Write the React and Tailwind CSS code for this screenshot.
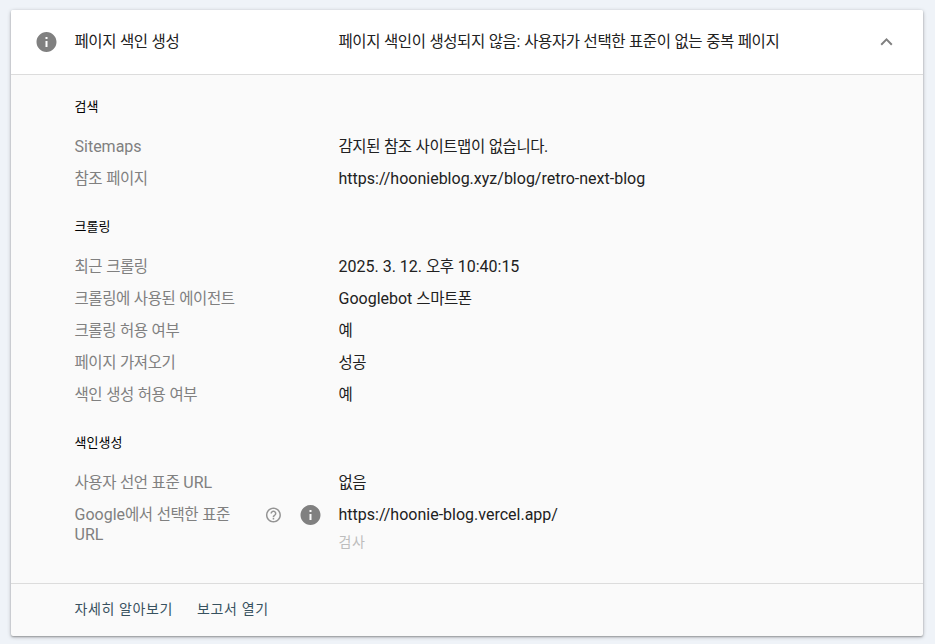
import React from "react";

// Sets Hangul runs slightly smaller and tighter than the Latin text around them.
function T({ children }) {
  return children.split(/([\uac00-\ud7a3]+)/).map((part, i) =>
    /[\uac00-\ud7a3]/.test(part) ? (
      <span key={i} className="text-[15.5px] leading-none tracking-[-0.43px]">{part}</span>
    ) : (
      part
    )
  );
}

function InfoIcon() {
  return (
    <svg viewBox="-0.5 0 24 24" className="size-6 shrink-0" fill="#808080">
      <path d="M12 2C6.48 2 2 6.48 2 12s4.48 10 10 10 10-4.48 10-10S17.52 2 12 2zm1 15h-2v-6h2v6zm0-8h-2V7h2v2z" />
    </svg>
  );
}

function HelpIcon() {
  return (
    <svg viewBox="-0.6 0 24 24" className="size-[18px] shrink-0" fill="#949494">
      <path d="M11 18h2v-2h-2v2zm1-16C6.48 2 2 6.48 2 12s4.48 10 10 10 10-4.48 10-10S17.52 2 12 2zm0 18c-4.41 0-8-3.59-8-8s3.59-8 8-8 8 3.59 8 8-3.59 8-8 8zm0-14c-2.21 0-4 1.79-4 4h2c0-1.1.9-2 2-2s2 .9 2 2c0 2-3 1.75-3 5h2c0-2.25 3-2.5 3-5 0-2.21-1.79-4-4-4z" />
    </svg>
  );
}

function Row({ label, value }) {
  return (
    <div className="flex py-1.5">
      <div className="w-[264px] shrink-0 text-[#808080]"><T>{label}</T></div>
      <div><T>{value}</T></div>
    </div>
  );
}

function Section({ title, children }) {
  return (
    <section className="mt-[22px]">
      <h2 className="mb-3.5 text-[13px] leading-5 text-black">{title}</h2>
      {children}
    </section>
  );
}

export default function App() {
  return (
    <div className="h-[644px] w-[935px] bg-[#eff3f8] pt-[10px] pl-[11px] font-[Roboto,'Noto_Sans_CJK_KR',sans-serif] text-base leading-5 text-[#212121]">
      <div className="flex h-[626px] w-[912px] flex-col overflow-hidden rounded-[2px] bg-[#fafafa] shadow-[0_1px_4px_rgba(0,0,0,0.22),0_1px_2px_rgba(0,0,0,0.28)]">
        <header className="flex h-[65px] shrink-0 items-center border-b border-[#dcdcdc] bg-white pl-[23px] pr-[25px]">
          <InfoIcon />
          <h1 className="ml-[16.5px] w-[264px] shrink-0"><T>페이지 색인 생성</T></h1>
          <div className="flex-1"><T>페이지 색인이 생성되지 않음: 사용자가 선택한 표준이 없는 중복 페이지</T></div>
          <svg viewBox="-0.5 0 24 24" className="size-6" fill="#808080">
            <path d="M12 8l-6 6 1.41 1.41L12 10.83l4.59 4.58L18 14z" />
          </svg>
        </header>
        <main className="flex-1 pl-[63.5px]">
          <Section title="검색">
            <Row label="Sitemaps" value="감지된 참조 사이트맵이 없습니다." />
            <Row label="참조 페이지" value="https://hoonieblog.xyz/blog/retro-next-blog" />
          </Section>
          <Section title="크롤링">
            <Row label="최근 크롤링" value="2025. 3. 12. 오후 10:40:15" />
            <Row label="크롤링에 사용된 에이전트" value="Googlebot 스마트폰" />
            <Row label="크롤링 허용 여부" value="예" />
            <Row label="페이지 가져오기" value="성공" />
            <Row label="색인 생성 허용 여부" value="예" />
          </Section>
          <Section title="색인생성">
            <Row label="사용자 선언 표준 URL" value="없음" />
            <div className="flex items-start py-1.5">
              <div className="w-[189.5px] shrink-0 pr-6 text-[#808080]"><T>Google에서 선택한 표준 URL</T></div>
              <div className="flex h-5 w-[74.5px] shrink-0 items-center gap-4">
                <HelpIcon />
                <InfoIcon />
              </div>
              <div>
                <div>https://hoonie-blog.vercel.app/</div>
                <div className="mt-[7px] text-sm leading-5 tracking-[0.5px] text-[#bdbdbd]">검사</div>
              </div>
            </div>
          </Section>
        </main>
        <footer className="flex h-[53px] shrink-0 items-center gap-6 border-t border-[#dcdcdc] pb-[2px] pl-[63.5px] text-sm tracking-[0.62px] text-[#37515f]">
          <a>자세히 알아보기</a>
          <a>보고서 열기</a>
        </footer>
      </div>
    </div>
  );
}
